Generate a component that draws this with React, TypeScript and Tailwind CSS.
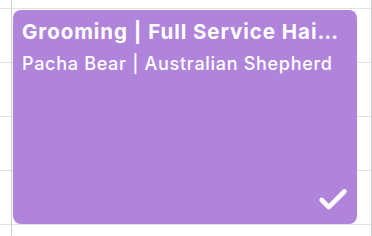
import { Check } from 'lucide-react'

const ROWS = [0, 1, 2, 3, 4]

export default function App() {
  return (
    <div className="w-[372px] h-[236px] overflow-hidden bg-white flex" style={{ fontFamily: 'Inter, "Noto Sans", sans-serif' }}>
      <div className="w-[11px] shrink-0 pt-[8px]">
        {ROWS.map((r) => (
          <div key={r} className="h-[54px] border-t border-[#e2e2e2]" />
        ))}
      </div>
      <div className="relative flex-1 border-l border-r border-[#cdcdcd] pt-[8px]">
        {ROWS.map((r) => (
          <div key={r} className="h-[54px] border-t border-[#e2e2e2]" />
        ))}

        <div className="absolute left-[1px] top-[10px] w-[344px] h-[214px] rounded-[8px] bg-[#b084db] pl-[9px] pr-[12px] pt-[10px] text-white">
          <div className="truncate text-[20.5px] leading-[24px] font-bold tracking-[0.95px]">
            Grooming | Full Service Haircut
          </div>
          <div className="mt-[9px] truncate text-[18px] leading-[22px] font-medium tracking-[0.7px]">
            Pacha Bear | Australian Shepherd
          </div>
          <Check className="absolute right-[7px] bottom-[7px] w-[34px] h-[34px]" strokeWidth={3.3} />
        </div>
      </div>
    </div>
  )
}
